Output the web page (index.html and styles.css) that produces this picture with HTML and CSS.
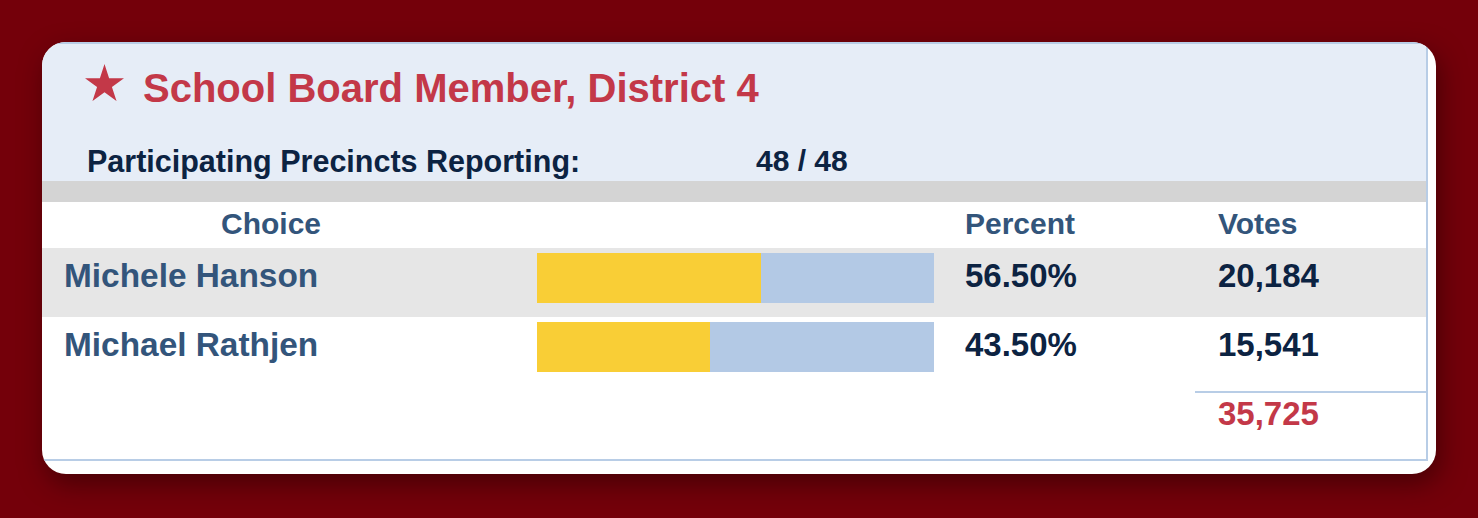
FILE: index.html
```html
<!DOCTYPE html>
<html lang="en">
<head>
<meta charset="utf-8">
<title>School Board Member, District 4</title>
<link rel="stylesheet" href="styles.css">
</head>
<body>
<div class="card">
  <div class="race">
    <div class="race-head">
      <div class="title-row">
        <svg class="star" width="39" height="37.1" viewBox="0 0 39 37.1" aria-hidden="true">
          <polygon points="19.5,0 24.1,14.17 39,14.17 26.94,22.92 31.55,37.08 19.5,28.33 7.45,37.08 12.06,22.92 0,14.17 14.9,14.17" fill="#c33848"/>
        </svg>
        <h1 class="title">School Board Member, District 4</h1>
      </div>
      <div class="precincts">
        <span class="precincts-label">Participating Precincts Reporting:</span>
        <span class="precincts-value">48 / 48</span>
      </div>
    </div>
    <div class="divider"></div>
    <div class="results">
      <div class="row row-head">
        <div class="cell name-head">Choice</div>
        <div class="cell"></div>
        <div class="cell pct">Percent</div>
        <div class="cell votes">Votes</div>
      </div>
      <div class="row row-data row-alt">
        <div class="cell name">Michele Hanson</div>
        <div class="cell barcell"><div class="bar"><div class="fill" style="width:56.5%"></div></div></div>
        <div class="cell pct">56.50%</div>
        <div class="cell votes">20,184</div>
      </div>
      <div class="row row-data">
        <div class="cell name">Michael Rathjen</div>
        <div class="cell barcell"><div class="bar"><div class="fill" style="width:43.5%"></div></div></div>
        <div class="cell pct">43.50%</div>
        <div class="cell votes">15,541</div>
      </div>
      <div class="row row-total">
        <div class="cell"></div>
        <div class="cell"></div>
        <div class="cell"></div>
        <div class="cell total">35,725</div>
      </div>
    </div>
  </div>
</div>
</body>
</html>
```

FILE: styles.css
```css
html, body {
  margin: 0;
  padding: 0;
}

body {
  background: #74000a;
  padding: 42px;
  font-family: "Liberation Sans", Arial, Helvetica, sans-serif;
  font-weight: bold;
}

.card {
  background: #ffffff;
  border-radius: 24px;
  overflow: hidden;
  padding: 0 8px 13px 0;
  box-shadow: 4px 10px 26px rgba(30, 0, 0, 0.5);
}

.race {
  border: 2px solid #b8cde6;
  border-left: 0;
}

.race-head {
  background: #e6edf7;
  padding: 21px 0 3px 0;
}

.title-row {
  display: flex;
  align-items: flex-start;
  padding-left: 43px;
  height: 46px;
}

.star {
  margin-top: -1px;
  margin-right: 19px;
  flex: none;
}

.title {
  margin: 0;
  font-size: 40px;
  line-height: 46px;
  font-weight: bold;
  color: #c33848;
}

.precincts {
  display: grid;
  grid-template-columns: 669px auto;
  margin-top: 33px;
  padding-left: 45px;
  font-size: 30px;
  line-height: 34px;
  color: #0c2342;
}

.precincts-label {
  font-size: 30.5px;
}

.divider {
  height: 21px;
  background: #d4d4d4;
}

.row {
  display: grid;
  grid-template-columns: 458px 434px 261px 1fr;
}

.row-head {
  height: 46px;
  font-size: 30px;
  line-height: 44px;
  color: #33557b;
}

.name-head {
  text-align: center;
}

.row-head .pct {
  padding-left: 31px;
}

.row-head .votes {
  padding-left: 23px;
}

.row-data {
  height: 69px;
  font-size: 33px;
  line-height: 38px;
}

.row-alt {
  background: #e6e6e6;
}

.row-data .cell {
  padding-top: 9px;
}

.name {
  padding-left: 22px;
  font-size: 33.4px;
  color: #33557b;
}

.row-data .barcell {
  padding-top: 5px;
  padding-left: 37px;
}

.bar {
  width: 397px;
  height: 50px;
  background: #b3c9e5;
}

.fill {
  height: 100%;
  background: #f9ce36;
}

.row-data .pct {
  padding-left: 31px;
  color: #0c2342;
}

.row-data .votes {
  padding-left: 23px;
  color: #0c2342;
}

.row-total {
  height: 73px;
  font-size: 33px;
  line-height: 38px;
}

.total {
  margin-top: 5px;
  border-top: 2px solid #b8cde6;
  padding-top: 2px;
  padding-left: 23px;
  color: #c33848;
}
```
